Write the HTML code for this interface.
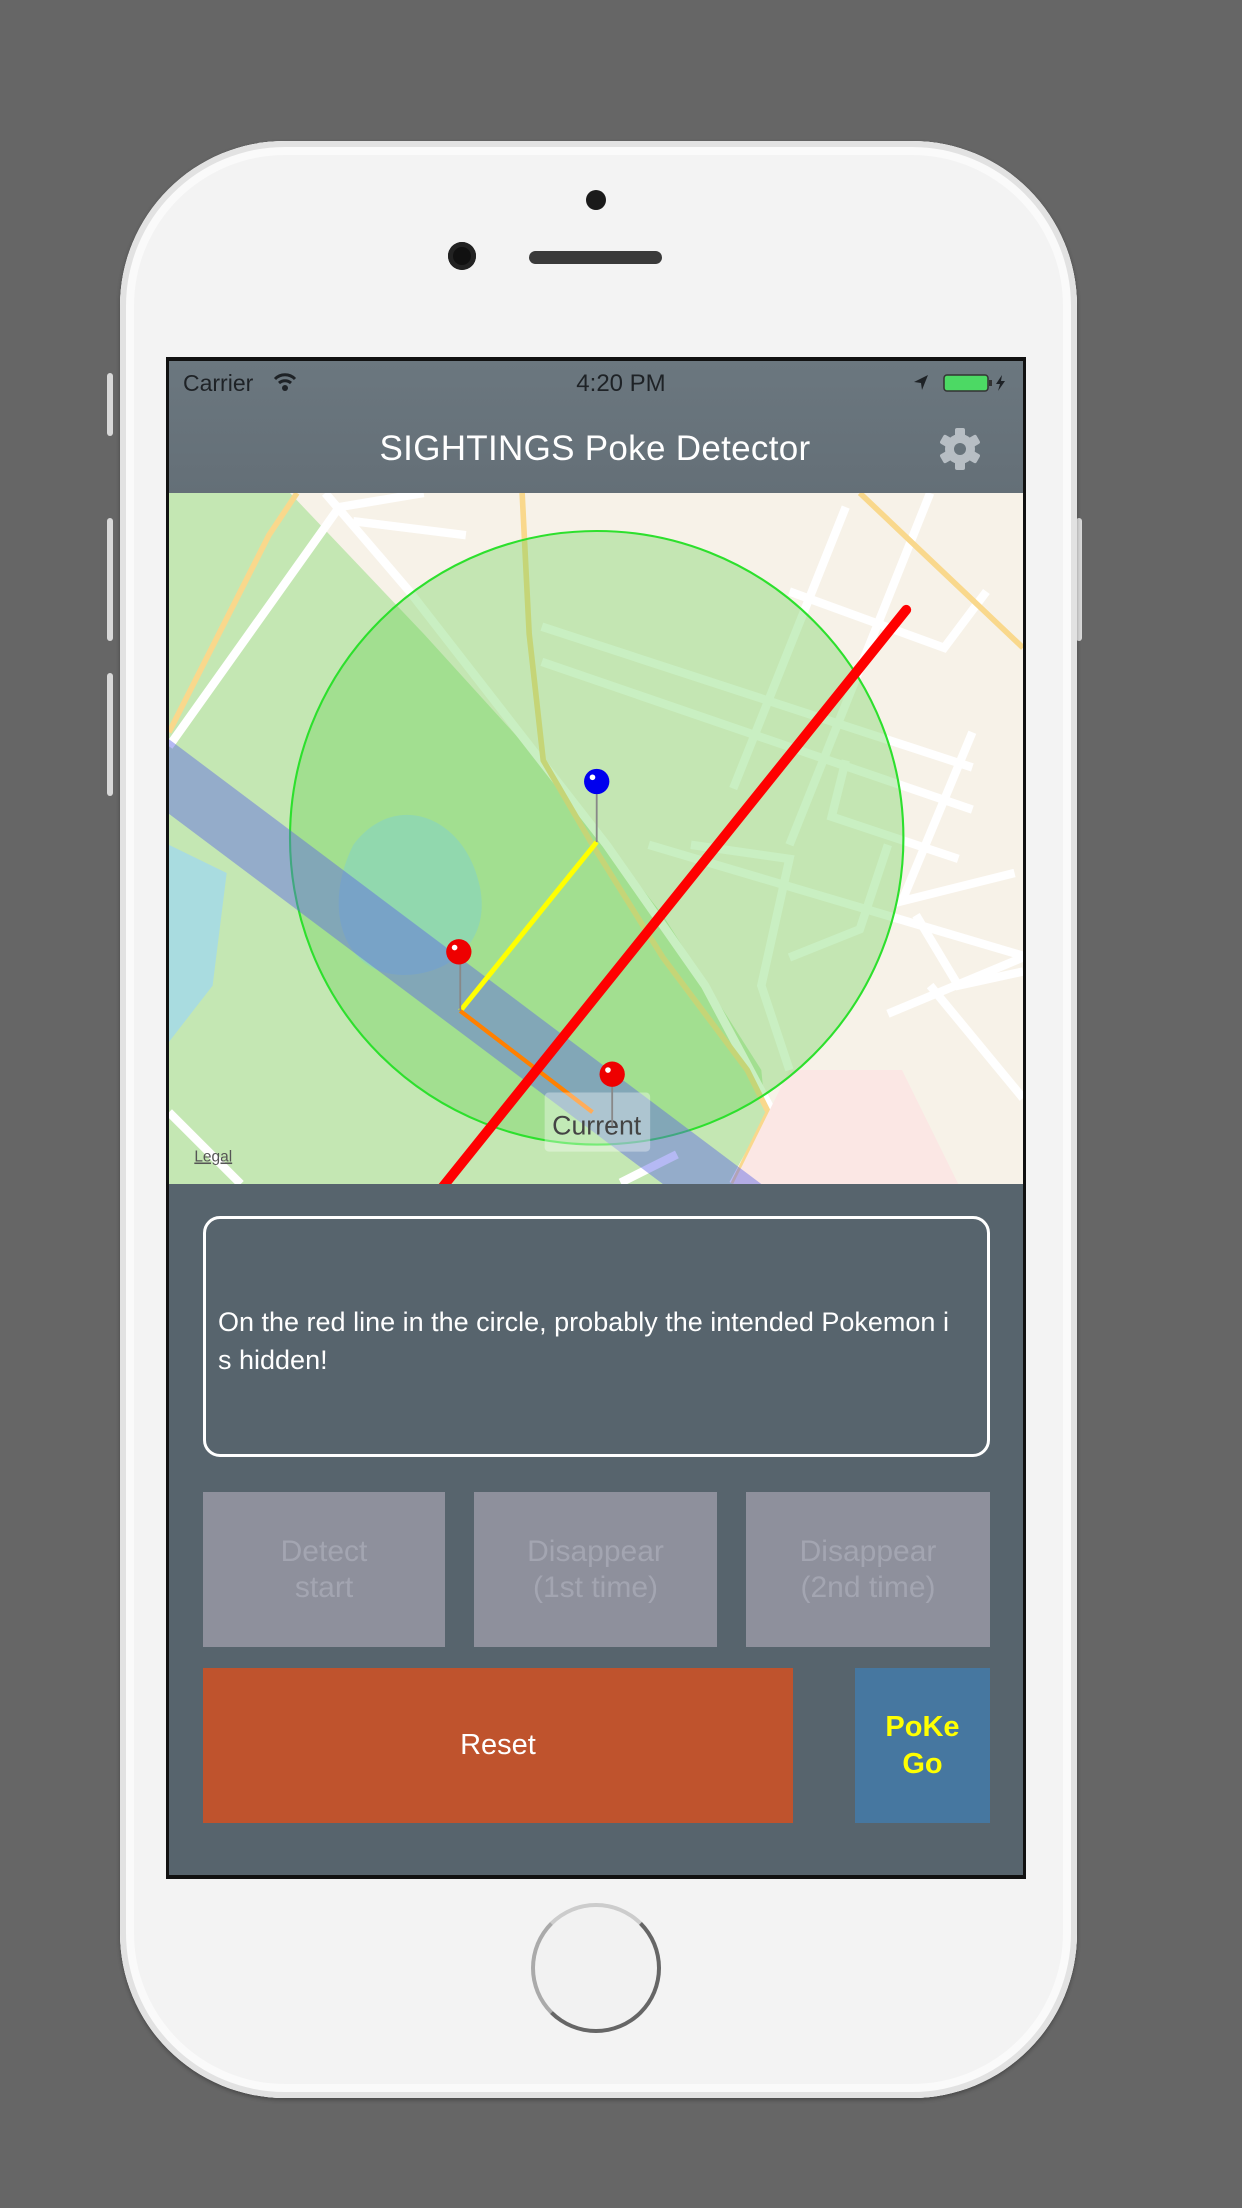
<!DOCTYPE html>
<html><head><meta charset="utf-8"><style>
*{margin:0;padding:0;box-sizing:border-box}
body{width:1242px;height:2208px;background:#666;position:relative;overflow:hidden;font-family:"Liberation Sans",sans-serif}
.abs{position:absolute}
.phone{left:120px;top:141px;width:957px;height:1957px;border-radius:165px;background:#f3f3f3;box-shadow:inset 0 0 0 6px #e2e2e2,inset 0 0 0 14px #fafafa,0 2px 4px rgba(0,0,0,.3)}
.btn{background:#8e909c;color:#a3a5b1;font-size:30px;text-align:center;display:flex;align-items:center;justify-content:center;line-height:36px}
</style></head><body>
<div class="abs" style="left:107px;top:373px;width:6px;height:63px;background:#d8d8d8;border-radius:3px"></div>
<div class="abs" style="left:107px;top:518px;width:6px;height:123px;background:#d8d8d8;border-radius:3px"></div>
<div class="abs" style="left:107px;top:673px;width:6px;height:123px;background:#d8d8d8;border-radius:3px"></div>
<div class="abs" style="left:1076px;top:518px;width:6px;height:123px;background:#d8d8d8;border-radius:3px"></div>
<div class="abs phone"></div>
<div class="abs" style="left:586px;top:190px;width:20px;height:20px;border-radius:50%;background:#1a1a1a"></div>
<div class="abs" style="left:448px;top:242px;width:28px;height:28px;border-radius:50%;background:#111;box-shadow:inset 0 0 0 5px #222"></div>
<div class="abs" style="left:529px;top:251px;width:133px;height:13px;border-radius:7px;background:#3a3a3a"></div>
<div class="abs" style="left:531px;top:1903px;width:130px;height:130px;border-radius:50%;border:4px solid #666;border-top-color:#ccc;border-left-color:#aaa;background:#f2f2f2"></div>
<!-- screen -->
<div class="abs" style="left:166px;top:357px;width:860px;height:1522px;background:#111"></div>
<div class="abs" style="left:169px;top:361px;width:854px;height:1514px;background:#57646d"></div>
<div class="abs" style="left:169px;top:361px;width:854px;height:132px;background:linear-gradient(#6b777f,#646f77)"></div>
<div class="abs" style="left:183px;top:370px;font-size:23px;color:#1e2226">Carrier</div>
<svg class="abs" style="left:273px;top:372px" width="24" height="20" viewBox="0 0 24 20"><path d="M2 7 A14 14 0 0 1 22 7" stroke="#1e2226" stroke-width="3" fill="none"/><path d="M6 11 A9 9 0 0 1 18 11" stroke="#1e2226" stroke-width="3" fill="none"/><circle cx="12" cy="16" r="3" fill="#1e2226"/></svg>
<div class="abs" style="left:0;width:1242px;top:370px;text-align:center;font-size:24px;color:#1e2226">4:20 PM</div>
<svg class="abs" style="left:912px;top:373px" width="100" height="20" viewBox="0 0 100 20"><path d="M2 9 L16 2 L10 17 L9 10Z" fill="#1e2226"/><rect x="32" y="2" width="44" height="16" rx="3" fill="#4cd964" stroke="#333" stroke-width="1.5"/><rect x="77" y="7" width="3" height="6" fill="#333"/><path d="M90 2 L84 11 L88 11 L86 18 L93 8 L89 8Z" fill="#1e2226"/></svg>
<div class="abs" style="left:0;width:1190px;top:429px;text-align:center;font-size:35px;color:#fff;letter-spacing:0.3px">SIGHTINGS Poke Detector</div>
<svg class="abs" style="left:938px;top:426px" width="44" height="46" viewBox="-22 -23 44 46"><g fill="#b7bec4"><circle r="15"/><rect x="-5" y="-21" width="10" height="42" rx="2"/><rect x="-5" y="-21" width="10" height="42" rx="2" transform="rotate(60)"/><rect x="-5" y="-21" width="10" height="42" rx="2" transform="rotate(120)"/></g><circle r="6" fill="#67737b"/></svg>
<!-- map -->
<svg class="abs" style="left:169px;top:493px" width="854" height="691" viewBox="119 350 607 491" preserveAspectRatio="none">
<rect x="119" y="350" width="607" height="491" fill="#f7f2e8"/>
<path d="M119 350 L205 350 L300 450 L400 560 L470 650 L540 760 L548 841 L119 841Z" fill="#c4e7b3"/>
<g fill="none" stroke="#fff" stroke-width="6">
<path d="M119 530 L240 360 L300 350"/><path d="M230 350 L290 420 L360 510 L430 600 L500 700 L548 790 L520 841"/>
<path d="M119 790 L170 841"/><path d="M440 840 L480 820"/>
<path d="M384 445 L690 545"/><path d="M384 470 L690 575"/><path d="M490 600 L560 610 L540 700 L560 760"/>
<path d="M460 600 L730 680"/><path d="M660 350 L560 600"/><path d="M600 360 L520 560"/>
<path d="M560 420 L670 460 L700 420"/><path d="M690 520 L640 640 L720 620"/><path d="M600 540 L590 580 L680 610"/>
<path d="M650 650 L680 700 L726 690"/><path d="M660 700 L726 780"/><path d="M560 680 L610 660 L630 600"/>
<path d="M630 720 L726 680"/><path d="M250 370 L330 380"/>
</g>
<g fill="none" stroke="#f9d88c" stroke-width="4">
<path d="M370 350 L375 450 L385 540 L420 600 L470 680 L530 760 L545 790 L520 841"/>
<path d="M119 520 L190 380 L210 350"/><path d="M610 350 L726 460"/>
</g>
<path d="M250 600 C280 560 330 580 340 630 C350 680 300 700 270 690 C240 680 230 640 250 600Z" fill="#a9dce0"/>
<path d="M119 600 L160 620 L150 700 L119 740Z" fill="#a9dce0"/>
<path d="M560 760 L640 760 L680 841 L520 841Z" fill="#fbe7e4"/>
<circle cx="423" cy="595" r="218" fill="rgba(100,210,80,.35)" stroke="#2de02d" stroke-width="1.5"/>
<path d="M119 525 L540 841 L470 841 L119 578Z" fill="rgba(90,100,230,.45)"/>
<line x1="423" y1="598" x2="326" y2="718" stroke="#ffff00" stroke-width="3.5"/>
<line x1="326" y1="718" x2="420" y2="790" stroke="#ff8000" stroke-width="3"/>
<line x1="643" y1="433" x2="312" y2="845" stroke="#ff0000" stroke-width="7" stroke-linecap="round"/>
<rect x="386" y="776" width="75" height="42" rx="3" fill="rgba(255,255,255,.35)"/>
<text x="423" y="806" font-size="19" fill="#444" text-anchor="middle" font-family="Liberation Sans">Current</text>
<text x="137" y="825" font-size="11" fill="#555" text-decoration="underline" font-family="Liberation Sans">Legal</text>
<g stroke="#888" stroke-width="1.3"><line x1="423" y1="560" x2="423" y2="598"/><line x1="326" y1="680" x2="326" y2="718"/><line x1="434" y1="768" x2="434" y2="800"/></g>
<circle cx="423" cy="555" r="9" fill="#0000ee"/><circle cx="420" cy="552" r="2" fill="#fff"/>
<circle cx="325" cy="676" r="9" fill="#ee0000"/><circle cx="322" cy="673" r="2" fill="#fff"/>
<circle cx="434" cy="763" r="9" fill="#ee0000"/><circle cx="431" cy="760" r="2" fill="#fff"/>
</svg>
<!-- panel -->
<div class="abs" style="left:203px;top:1216px;width:787px;height:241px;border:3px solid #fff;border-radius:17px"></div>
<div class="abs" style="left:218px;top:1303px;width:775px;font-size:27px;line-height:38px;color:#fff;white-space:nowrap">On the red line in the circle, probably the intended Pokemon i<br>s hidden!</div>
<div class="abs btn" style="left:203px;top:1492px;width:242px;height:155px">Detect<br>start</div>
<div class="abs btn" style="left:474px;top:1492px;width:243px;height:155px">Disappear<br>(1st time)</div>
<div class="abs btn" style="left:746px;top:1492px;width:244px;height:155px">Disappear<br>(2nd time)</div>
<div class="abs" style="left:203px;top:1668px;width:590px;height:155px;background:#bf532d;color:#fff;font-size:29px;display:flex;align-items:center;justify-content:center">Reset</div>
<div class="abs" style="left:855px;top:1668px;width:135px;height:155px;background:#4677a0;color:#ffff00;font-size:29px;font-weight:bold;display:flex;align-items:center;justify-content:center;text-align:center;line-height:37px">PoKe<br>Go</div>
</body></html>
